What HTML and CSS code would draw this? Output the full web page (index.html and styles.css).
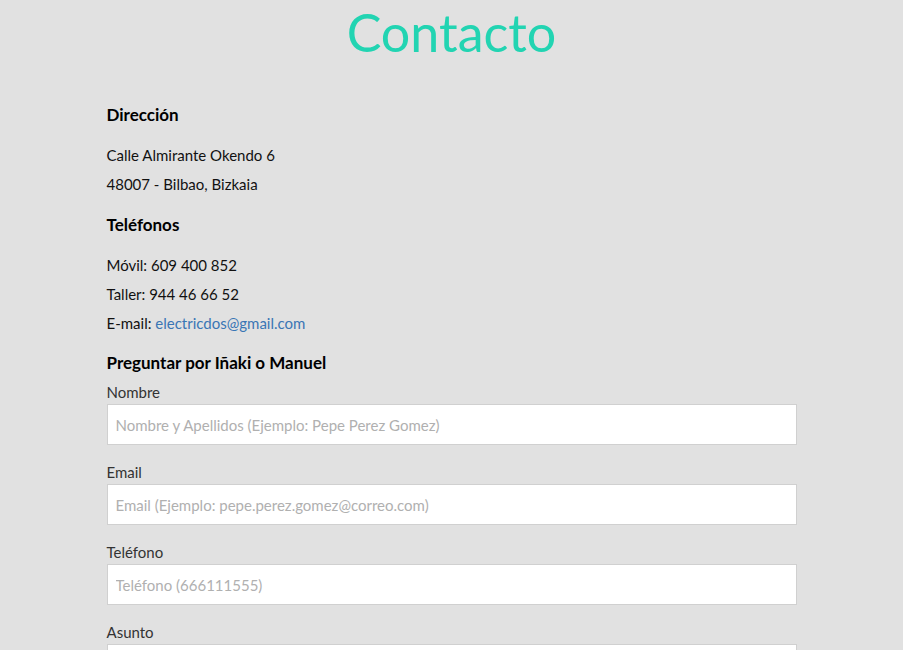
FILE: index.html
```html
<!DOCTYPE html>
<html lang="es">
<head>
<meta charset="utf-8">
<title>Contacto</title>
<link rel="stylesheet" href="styles.css">
</head>
<body>
<h1 class="title">Contacto</h1>
<main class="content">
  <h3 class="heading">Dirección</h3>
  <p class="lines">Calle Almirante Okendo 6<br>48007 - Bilbao, Bizkaia</p>
  <h3 class="heading">Teléfonos</h3>
  <p class="lines lines-last">Móvil: 609 400 852<br>Taller: 944 46 66 52<br>E-mail: <a class="link" href="#">electricdos@gmail.com</a></p>
  <h3 class="heading">Preguntar por Iñaki o Manuel</h3>
  <form class="form">
    <label class="field"><span class="label">Nombre</span><input class="input" type="text" placeholder="Nombre y Apellidos (Ejemplo: Pepe Perez Gomez)"></label>
    <label class="field"><span class="label">Email</span><input class="input" type="text" placeholder="Email (Ejemplo: pepe.perez.gomez@correo.com)"></label>
    <label class="field"><span class="label">Teléfono</span><input class="input" type="text" placeholder="Teléfono (666111555)"></label>
    <label class="field"><span class="label">Asunto</span><input class="input" type="text"></label>
  </form>
</main>
</body>
</html>
```
FILE: styles.css
```css
html, body {
  margin: 0;
  padding: 0;
  background: #e1e1e1;
  font-family: "Lato", "Noto Sans", sans-serif;
  color: #111;
}
.title {
  margin: 0;
  height: 64px;
  line-height: 64px;
  text-align: center;
  font-size: 52px;
  font-weight: 400;
  color: #22d4b2;
}
.content {
  width: 690px;
  margin: 41px auto 0;
}
.heading {
  margin: 0;
  font-size: 17px;
  line-height: 20px;
  font-weight: 700;
  color: #000;
}
.lines {
  margin: 16px 0 16px;
  font-size: 15px;
  line-height: 29px;
  color: #111;
}
.lines-last {
  margin-bottom: 15px;
}
.link {
  color: #3a76b5;
  text-decoration: none;
}
.form {
  display: flex;
  flex-direction: column;
  gap: 17px;
  margin-top: 9px;
}
.field {
  display: flex;
  flex-direction: column;
  gap: 2px;
}
.label {
  font-size: 15px;
  line-height: 20px;
  color: #333;
}
.input {
  box-sizing: border-box;
  width: 690px;
  height: 41px;
  margin: 0;
  padding: 0 8px;
  border: 1px solid #d0d0d0;
  background: #fff;
  font-family: inherit;
  font-size: 15px;
  color: #333;
  outline: none;
}
.input::placeholder {
  color: #b0b0b0;
}
```
